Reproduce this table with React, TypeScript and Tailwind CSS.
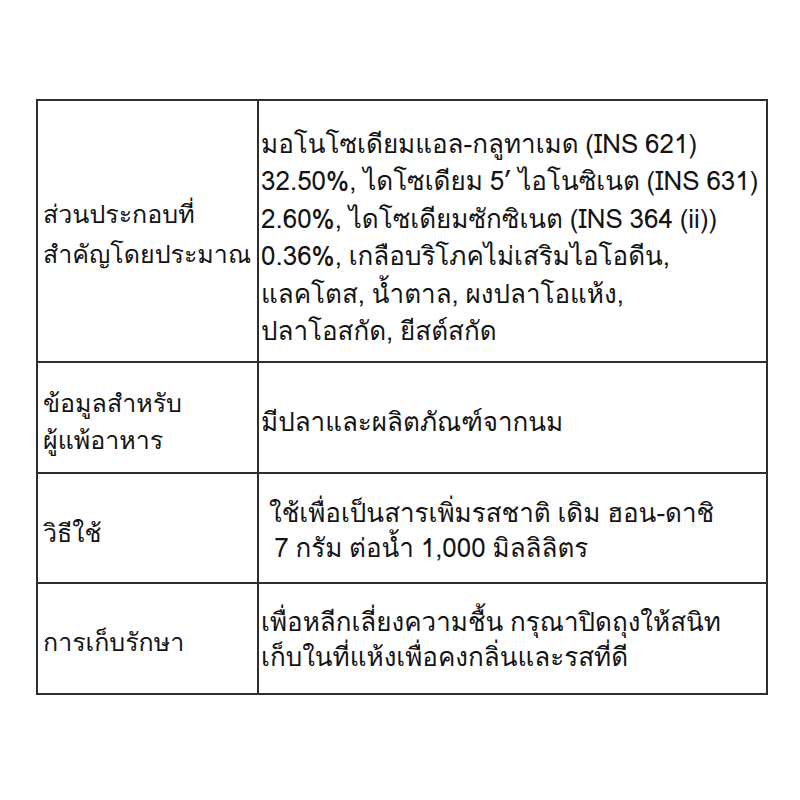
import React from "react";

type Row = {
  label: string[];
  value: string[];
  labelCls: string;
  valueCls: string;
  height: string;
};

const rows: Row[] = [
  {
    label: ["ส่วนประกอบที่", "สำคัญโดยประมาณ"],
    value: [
      "มอโนโซเดียมแอล-กลูทาเมด (INS 621)",
      "32.50%, ไดโซเดียม 5’ ไอโนซิเนต (INS 631)",
      "2.60%, ไดโซเดียมซักซิเนต (INS 364 (ii))",
      "0.36%, เกลือบริโภคไม่เสริมไอโอดีน,",
      "แลคโตส, น้ำตาล, ผงปลาโอแห้ง,",
      "ปลาโอสกัด, ยีสต์สกัด",
    ],
    labelCls: "leading-[40px] pt-[6px]",
    valueCls: "leading-[37.5px] pt-[12px] pl-[2px]",
    height: "h-[262px]",
  },
  {
    label: ["ข้อมูลสำหรับ", "ผู้แพ้อาหาร"],
    value: ["มีปลาและผลิตภัณฑ์จากนม"],
    labelCls: "leading-[37px] pt-[8px]",
    valueCls: "leading-[37px] pt-[8px] pl-[2px]",
    height: "h-[111px]",
  },
  {
    label: ["วิธีใช้"],
    value: ["ใช้เพื่อเป็นสารเพิ่มรสชาติ เดิม ฮอน-ดาชิ", "\u00a07 กรัม ต่อน้ำ 1,000 มิลลิลิตร"],
    labelCls: "leading-[37px] pt-[10px]",
    valueCls: "leading-[35px] pt-[4px] pl-[10px]",
    height: "h-[110px]",
  },
  {
    label: ["การเก็บรักษา"],
    value: ["เพื่อหลีกเลี่ยงความชื้น กรุณาปิดถุงให้สนิท", "เก็บในที่แห้งเพื่อคงกลิ่นและรสที่ดี"],
    labelCls: "leading-[37px] pt-[8px]",
    valueCls: "leading-[35px] pt-[0px] pl-[2px]",
    height: "h-[111px]",
  },
];

export default function App() {
  return (
    <div className="w-[800px] h-[800px] bg-white pt-[99px] pl-[36px]">
      <table
        className="table-fixed w-[730px] border-collapse border-2 border-[#2e2e2e] text-[#141414] text-[26px] [word-spacing:-2px]"
        style={{ fontFamily: 'Loma, "Noto Sans Thai Looped", sans-serif' }}
      >
        <colgroup>
          <col className="w-[221px]" />
          <col className="w-[509px]" />
        </colgroup>
        <tbody>
          {rows.map((r, i) => (
            <tr key={i} className={r.height}>
              <td className={`border-2 border-[#2e2e2e] align-middle pl-[5px] pr-0 text-[25px] ${r.labelCls}`}>
                {r.label.map((l, j) => (
                  <div key={j} className="whitespace-nowrap">{l}</div>
                ))}
              </td>
              <td className={`border-2 border-[#2e2e2e] align-middle ${r.valueCls}`}>
                {r.value.map((l, j) => (
                  <div key={j} className="whitespace-nowrap">{l}</div>
                ))}
              </td>
            </tr>
          ))}
        </tbody>
      </table>
    </div>
  );
}
